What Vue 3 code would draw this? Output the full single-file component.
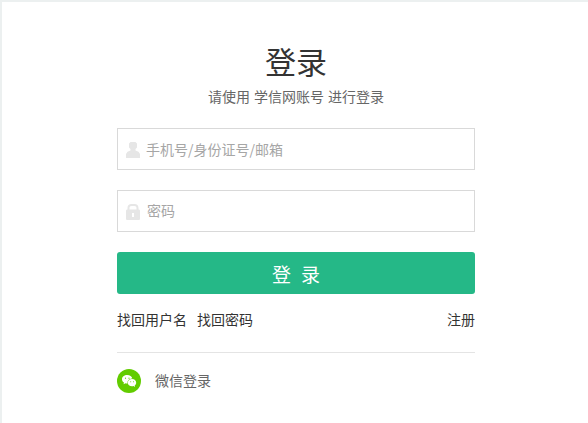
<script setup>
import { ref } from 'vue'

const username = ref('')
const password = ref('')

function login() {
    if (!username.value || !password.value) {
        return
    }
    password.value = ''
}
</script>

<template>
    <div class="page">
        <form class="login" @submit.prevent="login">
            <h1>登录</h1>
            <p class="tip">请使用 学信网账号 进行登录</p>

            <label class="field">
                <svg class="icon" width="14" height="16" viewBox="0 0 14 16">
                    <path d="M4.500 0h5L11 1.500v4L9.500 7v1.500l3 1.200L14 12v4H0v-4l1.500-2.300 3-1.200V7L3 5.500v-4z" />
                </svg>
                <input v-model="username" type="text" placeholder="手机号/身份证号/邮箱">
            </label>

            <label class="field">
                <svg class="icon" width="14" height="16" viewBox="0 0 14 16">
                    <path fill-rule="evenodd" d="M1.500 5.500V4C1.500 1.500 3 0 5.500 0h3C11 0 12.500 1.500 12.500 4v1.500c1 0 1.500.5 1.500 1.500v7.500c0 1-.5 1.500-1.500 1.500h-11C.5 16 0 15.500 0 14.500V7c0-1 .5-1.500 1.500-1.500zm2 0h7V4c0-1.300-.7-2-2-2h-3c-1.300 0-2 .7-2 2zM6 9v4h2V9z" />
                </svg>
                <input v-model="password" class="password" type="password" placeholder="密码">
            </label>

            <button class="submit" type="submit"><span>登</span><span>录</span></button>

            <div class="links">
                <a>找回用户名</a>
                <a>找回密码</a>
                <a class="register">注册</a>
            </div>

            <div class="other">
                <svg width="24" height="24" viewBox="0 0 24 24">
                    <circle cx="12" cy="12" r="12" fill="#62cc00" />
                    <path fill="#fff" d="M10.200 6C7.200 6 5 7.800 5 10.200c0 1.400.8 2.600 2 3.400L6.500 15.200l2-1c.5.100 1.100.2 1.700.2h.4c-.6-2.700 1.700-5 4.700-5C14.900 7.400 12.800 6 10.200 6z" />
                    <path fill="#fff" d="M15 10c-2.400 0-4.200 1.500-4.200 3.700S12.600 17.300 15 17.300c.5 0 1-.1 1.500-.2l1.600.9-.4-1.500c.9-.6 1.500-1.600 1.500-2.800C19.200 11.500 17.400 10 15 10z" />
                    <g fill="#62cc00">
                        <circle cx="8.500" cy="9.200" r=".6" />
                        <circle cx="12" cy="9.200" r=".6" />
                        <circle cx="13.700" cy="12.700" r=".5" />
                        <circle cx="16.500" cy="12.700" r=".5" />
                    </g>
                </svg>
                <span class="wechat">微信登录</span>
            </div>
        </form>
    </div>
</template>

<style>
body {
    background: #fff;
}
</style>

<style scoped>
.page {
    box-sizing: border-box;
    height: 423px;
    overflow: hidden;
    padding: 43px 0 0 115px;
    border-top: 2px solid #ecf0f0;
    border-left: 2px solid #ecf0f0;
    font-family: "Liberation Sans", "Noto Sans CJK SC", sans-serif;
    font-size: 14px;
    color: #333;
}
.login {
    width: 358px;
}
h1 {
    margin: 0;
    font-size: 31px;
    font-weight: normal;
    line-height: 38px;
    text-align: center;
}
.tip {
    margin: 4px 0 20px;
    line-height: 21px;
    text-align: center;
    color: #666;
}

/* inputs */
.field {
    box-sizing: border-box;
    display: flex;
    align-items: center;
    height: 42px;
    margin-bottom: 20px;
    padding: 0 8px;
    border: 1px solid #d9d9d9;
}
.icon {
    flex: none;
    margin-top: 2px;
    fill: #e6e6e6;
}
input {
    flex: 1;
    min-width: 0;
    height: 38px;
    margin: 0;
    padding: 0 0 0 6px;
    border: 0;
    outline: 0;
    background: none;
    font-family: "Noto Sans CJK SC", sans-serif;
    font-size: 14px;
    color: #333;
}
.password {
    padding: 0 0 2px 7px;
    box-sizing: border-box;
}
input::placeholder {
    color: #a6a6a6;
    opacity: 1;
}

.submit {
    display: flex;
    justify-content: center;
    align-items: center;
    gap: 10px;
    width: 100%;
    height: 42px;
    padding: 0;
    border: 0;
    border-radius: 3px;
    background: #25b887;
    font-family: inherit;
    font-size: 19px;
    color: #fff;
    cursor: pointer;
}

/* bottom links */
.links {
    display: flex;
    gap: 10px;
    height: 59px;
    box-sizing: border-box;
    padding-top: 16px;
    line-height: 20px;
    border-bottom: 1px solid #e4e4e4;
}
.links a {
    cursor: pointer;
}
.register {
    margin-left: auto;
}
.other {
    display: flex;
    align-items: center;
    gap: 14px;
    padding-top: 16px;
    color: #666;
}
.wechat {
    padding-bottom: 2px;
}
</style>
